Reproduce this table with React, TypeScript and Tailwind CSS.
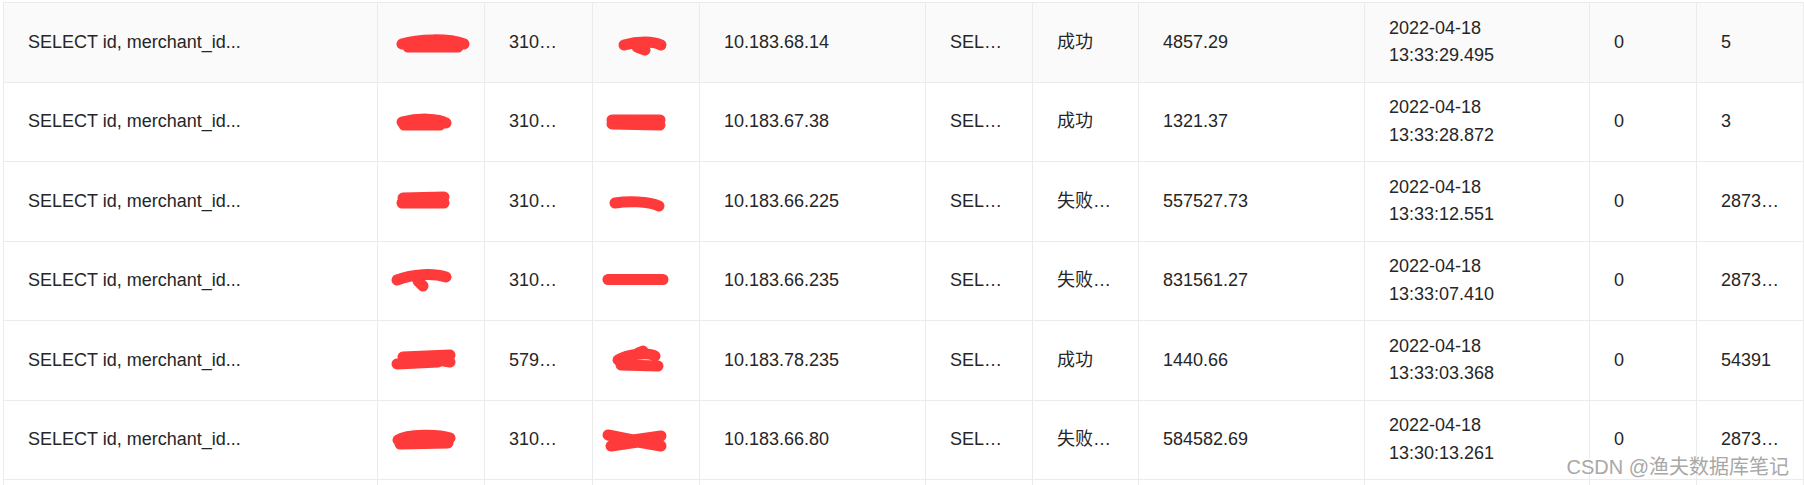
import React from 'react';

type Row = {
  sql: string;
  idCard: string;
  ip: string;
  stmt: string;
  status: string;
  cost: string;
  time: string;
  err: string;
  rows: string;
  blobA: string[];
  blobB: string[];
};

const rows: Row[] = [
  {
    sql: 'SELECT id, merchant_id...',
    idCard: '310…',
    ip: '10.183.68.14',
    stmt: 'SEL…',
    status: '成功',
    cost: '4857.29',
    time: '2022-04-18 13:33:29.495',
    err: '0',
    rows: '5',
    blobA: ['M24 22 C40 17, 70 16, 86 22', 'M30 25 L80 25'],
    blobB: ['M31 23 C45 19, 60 19, 68 23', 'M44 25 L52 28'],
  },
  {
    sql: 'SELECT id, merchant_id...',
    idCard: '310…',
    ip: '10.183.67.38',
    stmt: 'SEL…',
    status: '成功',
    cost: '1321.37',
    time: '2022-04-18 13:33:28.872',
    err: '0',
    rows: '3',
    blobA: ['M24 20 C40 16, 60 16, 68 21', 'M26 23 L62 23'],
    blobB: ['M19 18 L67 18', 'M19 22 L67 23'],
  },
  {
    sql: 'SELECT id, merchant_id...',
    idCard: '310…',
    ip: '10.183.66.225',
    stmt: 'SEL…',
    status: '失败…',
    cost: '557527.73',
    time: '2022-04-18 13:33:12.551',
    err: '0',
    rows: '2873…',
    blobA: ['M25 17 L66 16', 'M24 22 L66 22'],
    blobB: ['M22 22 C35 20, 55 20, 66 25'],
  },
  {
    sql: 'SELECT id, merchant_id...',
    idCard: '310…',
    ip: '10.183.66.235',
    stmt: 'SEL…',
    status: '失败…',
    cost: '831561.27',
    time: '2022-04-18 13:33:07.410',
    err: '0',
    rows: '2873…',
    blobA: ['M19 19 C35 13, 55 12, 68 16', 'M40 20 L45 25'],
    blobB: ['M15 18.5 L70 18.5'],
  },
  {
    sql: 'SELECT id, merchant_id...',
    idCard: '579…',
    ip: '10.183.78.235',
    stmt: 'SEL…',
    status: '成功',
    cost: '1440.66',
    time: '2022-04-18 13:33:03.368',
    err: '0',
    rows: '54391',
    blobA: ['M19 24 L60 22', 'M25 17 L72 15', 'M60 20 L72 22'],
    blobB: ['M25 20 C35 14, 55 12, 62 16', 'M28 25 L65 26', 'M45 13 L50 11'],
  },
  {
    sql: 'SELECT id, merchant_id...',
    idCard: '310…',
    ip: '10.183.66.80',
    stmt: 'SEL…',
    status: '失败…',
    cost: '584582.69',
    time: '2022-04-18 13:30:13.261',
    err: '0',
    rows: '2873…',
    blobA: ['M20 20 C30 14, 60 14, 72 18', 'M22 24 L70 23'],
    blobB: ['M15 15 L40 20 L68 16', 'M18 26 L45 22 L68 26'],
  },
];

// redaction scribble drawn over the cell
function Scribble({ paths, width }: { paths: string[]; width: number }) {
  return (
    <svg width={width} height={40} viewBox={`0 0 ${width} 40`} className="shrink-0">
      {paths.map((d, i) => (
        <path
          key={i}
          d={d}
          fill="none"
          stroke="#fe3a3a"
          strokeWidth={11}
          strokeLinecap="round"
          strokeLinejoin="round"
        />
      ))}
    </svg>
  );
}

const cell = 'flex h-full items-center border-r border-[#ebebeb] px-[24px] shrink-0 whitespace-nowrap';

function TableRow({ row, hover }: { row: Row; hover?: boolean }) {
  return (
    <div
      className={`flex h-[79.5px] border-b border-[#ebebeb] ${hover ? 'bg-[#fafafa]' : 'bg-white'}`}
    >
      <div className={`${cell} w-[374px]`}>
        <span>{row.sql}</span>
      </div>
      <div className="flex h-full w-[107px] shrink-0 items-center border-r border-[#ebebeb]">
        <Scribble paths={row.blobA} width={106} />
      </div>
      <div className={`${cell} w-[108px]`}>
        <span>{row.idCard}</span>
      </div>
      <div className="flex h-full w-[107px] shrink-0 items-center border-r border-[#ebebeb]">
        <Scribble paths={row.blobB} width={106} />
      </div>
      <div className={`${cell} w-[226px]`}>
        <span>{row.ip}</span>
      </div>
      <div className={`${cell} w-[107px]`}>
        <span>{row.stmt}</span>
      </div>
      <div className={`${cell} w-[106px]`}>
        <span>{row.status}</span>
      </div>
      <div className={`${cell} w-[226px]`}>
        <span>{row.cost}</span>
      </div>
      <div className="flex h-full w-[225px] shrink-0 items-center border-r border-[#ebebeb] px-[24px]">
        <span>{row.time}</span>
      </div>
      <div className={`${cell} w-[107px]`}>
        <span>{row.err}</span>
      </div>
      <div className={`${cell} w-[107px]`}>
        <span>{row.rows}</span>
      </div>
    </div>
  );
}

export default function App() {
  return (
    <div className="relative h-[485px] w-[1804px] overflow-hidden bg-white pl-[3px] pt-[2px]">
      <div
        className="w-[1810px] border-l border-t border-[#ebebeb] text-[18px] leading-[27.5px] text-[#262626]"
        style={{ fontFamily: '"Liberation Sans", Arial, "Noto Sans CJK SC", sans-serif' }}
      >
        {rows.map((row, i) => (
          <TableRow key={i} row={row} hover={i === 0} />
        ))}
        <div className="flex h-[79.5px]">
          {[374, 107, 108, 107, 226, 107, 106, 226, 225, 107, 107].map((w, i) => (
            <div key={i} className="h-full shrink-0 border-r border-[#ebebeb]" style={{ width: w }} />
          ))}
        </div>
      </div>
      <div
        className="absolute bottom-[6px] right-[15px] text-[20px] leading-[24px] text-[#a8a8a8] [text-shadow:0_0_2px_#fff]"
        style={{ fontFamily: '"Liberation Sans", "Noto Sans CJK SC", sans-serif' }}
      >
        CSDN @渔夫数据库笔记
      </div>
    </div>
  );
}
